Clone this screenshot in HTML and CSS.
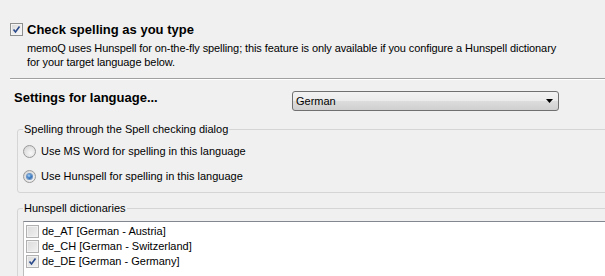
FILE: index.html
```html
<!DOCTYPE html>
<html>
<head>
<meta charset="utf-8">
<link rel="stylesheet" href="styles.css">
</head>
<body>
<div class="page">
  <div class="main-check">
    <span class="cb">
      <svg viewBox="0 0 9 9" width="9" height="9"><path d="M1.5 4.5 L3.5 7 L7.5 1.5" fill="none" stroke="#2b4a8c" stroke-width="1.6"/></svg>
    </span>
    <span class="title">Check spelling as you type</span>
  </div>
  <p class="desc">memoQ uses Hunspell for on-the-fly spelling; this feature is only available if you configure a Hunspell dictionary<br>for your target language below.</p>
  <hr class="sep">
  <div class="lang-row">
    <span class="title lang-label">Settings for language...</span>
    <div class="select">
      <span class="select-text">German</span>
      <svg class="arrow" viewBox="0 0 7 4" width="7" height="4"><path d="M0 0 H7 L3.5 4 Z" fill="#000"/></svg>
    </div>
  </div>
  <fieldset class="group g1">
    <legend>Spelling through the Spell checking dialog</legend>
    <div class="radio-row first"><span class="radio"></span><span>Use MS Word for spelling in this language</span></div>
    <div class="radio-row second"><span class="radio on"></span><span>Use Hunspell for spelling in this language</span></div>
  </fieldset>
  <fieldset class="group g2">
    <legend>Hunspell dictionaries</legend>
    <div class="listbox">
      <div class="item"><span class="cb dis"></span><span>de_AT [German - Austria]</span></div>
      <div class="item"><span class="cb dis"></span><span>de_CH [German - Switzerland]</span></div>
      <div class="item"><span class="cb dis">
        <svg viewBox="0 0 9 9" width="9" height="9"><path d="M1.5 4.5 L3.5 7 L7.5 1.5" fill="none" stroke="#2b4a8c" stroke-width="1.6"/></svg>
      </span><span>de_DE [German - Germany]</span></div>
    </div>
  </fieldset>
</div>
</body>
</html>
```
FILE: styles.css
```css
html, body {
  margin: 0;
  padding: 0;
  background: #f0f0f0;
}
body {
  font-family: "Liberation Sans", Arial, sans-serif;
  font-size: 11px;
  line-height: 13px;
  color: #000;
}
.page {
  box-sizing: border-box;
  height: 276px;
  overflow: hidden;
  padding-top: 22px;
}
.title {
  font-weight: bold;
  font-size: 13px;
  line-height: 15px;
}
.main-check {
  display: flex;
  align-items: center;
  gap: 4px;
  margin-left: 10px;
}
.cb {
  box-sizing: border-box;
  width: 13px;
  height: 13px;
  border: 1px solid #8e8f8f;
  background: linear-gradient(135deg, #d6d6d6 0%, #eeeeee 60%, #fafafa 100%);
  box-shadow: inset 0 0 0 1px #f4f4f4;
  display: flex;
  align-items: center;
  justify-content: center;
  flex: none;
}
.cb.dis {
  border-color: #b1b1b1;
  background: linear-gradient(135deg, #dcdcdc 0%, #e8e8e8 60%, #f2f2f2 100%);
  box-shadow: inset 0 0 0 1px #f2f2f2;
}
.desc {
  margin: 4px 0 0 27px;
  line-height: 14px;
  letter-spacing: -0.1px;
}
.sep {
  border: 0;
  border-top: 1px solid #a0a0a0;
  border-bottom: 1px solid #ffffff;
  height: 0;
  margin: 9px 0 0 10px;
}
.lang-row {
  display: flex;
  align-items: flex-start;
  margin-top: 10px;
  padding-left: 14px;
}
.lang-label {
  width: 278px;
  flex: none;
}
.select {
  box-sizing: border-box;
  width: 267px;
  height: 20px;
  margin-top: 1px;
  border: 1px solid #707070;
  border-radius: 3px;
  background: linear-gradient(#f2f2f2 0%, #ebebeb 50%, #dddddd 50%, #cfcfcf 100%);
  display: flex;
  align-items: center;
  justify-content: space-between;
  padding: 0 5px 0 3px;
}
.group {
  border: 1px solid #d5d5d5;
  border-radius: 3px;
  padding: 0;
  margin: 0 -20px 0 17px;
  min-width: 0;
}
.group legend {
  padding: 0 1px;
  margin-left: 5px;
  line-height: 13px;
}
.g1 {
  margin-top: 12px;
  padding-bottom: 9px;
}
.radio-row {
  display: flex;
  align-items: center;
  gap: 5px;
  padding-left: 5px;
  height: 13px;
}
.radio-row.first {
  margin-top: 9px;
}
.radio-row.second {
  margin-top: 12px;
}
.radio {
  box-sizing: border-box;
  width: 13px;
  height: 13px;
  border-radius: 50%;
  border: 1px solid #9a9a9a;
  background: radial-gradient(circle at 60% 65%, #f8f8f8 0%, #e4e4e4 50%, #cfcfcf 100%);
  display: flex;
  align-items: center;
  justify-content: center;
  flex: none;
}
.radio.on::after {
  content: "";
  width: 5px;
  height: 5px;
  border-radius: 50%;
  background: radial-gradient(circle at 40% 35%, #b8dcf8 0%, #3d7fc8 45%, #1c4f8f 100%);
  box-shadow: 0 0 0 1px #6b93c4;
}
.g2 {
  margin-top: 9px;
  height: 200px;
}
.listbox {
  margin: 6px 0 0 5px;
  border: 1px solid #828790;
  border-left-color: #bdbdbd;
  background: #fff;
  padding-top: 2px;
  height: 100px;
}
.item {
  display: flex;
  align-items: center;
  gap: 3px;
  padding-left: 2px;
  height: 15px;
  line-height: 15px;
}
```
